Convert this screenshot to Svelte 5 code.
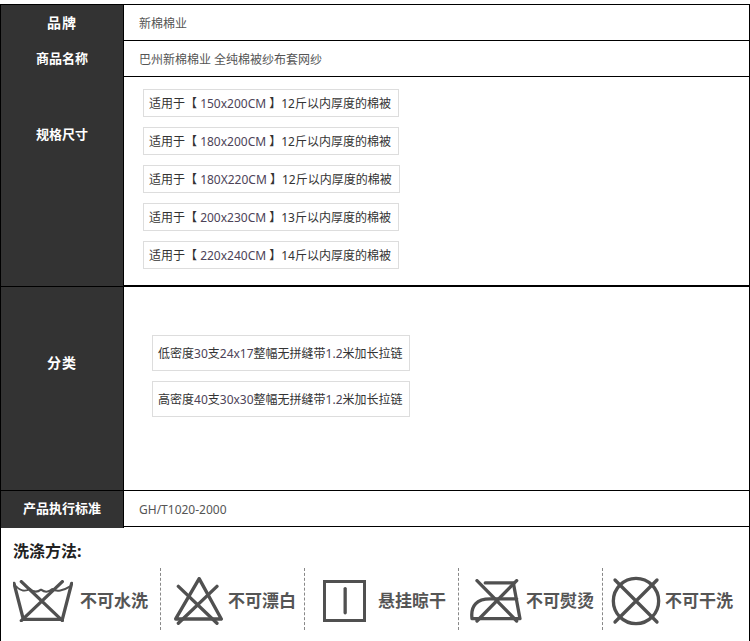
<script lang="ts">
	const sizes = [
		{ size: '150x200CM', rest: '12斤以内厚度的棉被' },
		{ size: '180x200CM', rest: '12斤以内厚度的棉被' },
		{ size: '180X220CM', rest: '12斤以内厚度的棉被' },
		{ size: '200x230CM', rest: '13斤以内厚度的棉被' },
		{ size: '220x240CM', rest: '14斤以内厚度的棉被' }
	];

	const kinds = [
		['低密度', '30', '支', '24x17', '整幅无拼缝带', '1.2', '米加长拉链'],
		['高密度', '40', '支', '30x30', '整幅无拼缝带', '1.2', '米加长拉链']
	];
</script>

<div class="page">
	<div class="sheet">
		<div class="row brand">
			<div class="label big">品牌</div>
			<div class="value">新棉棉业</div>
		</div>
		<div class="row name">
			<div class="label">商品名称</div>
			<div class="value">巴州新棉棉业 全纯棉被纱布套网纱</div>
		</div>
		<div class="row spec">
			<div class="label">规格尺寸</div>
			<div class="chips">
				{#each sizes as s}
					<div class="chip">适用于【 <span class="num">{s.size}</span> 】{s.rest}</div>
				{/each}
			</div>
		</div>
		<div class="row kind">
			<div class="label big">分类</div>
			<div class="chips">
				{#each kinds as k}
					<div class="chip">{#each k as part, i}{#if i % 2 === 1}<span class="num">{part}</span>{:else}{part}{/if}{/each}</div>
				{/each}
			</div>
		</div>
		<div class="row standard">
			<div class="label">产品执行标准</div>
			<div class="value">GH/T1020-2000</div>
		</div>

		<div class="care">
			<h3>洗涤方法:</h3>
			<div class="care-row">
				<div class="care-item">
					<svg class="wash" viewBox="0 0 180 126">
						<path d="M3 10 L31 118 H148 L176 10" />
						<path d="M10 20 C22 32 38 36 50 26 C60 36 72 38 84 29 C96 38 108 36 118 27 C130 36 152 32 170 20" class="thin" />
						<path d="M25 5 L148 122 M148 5 L25 122" />
					</svg>
					<span>不可水洗</span>
				</div>
				<div class="care-item">
					<svg class="bleach" viewBox="0 0 146 143">
						<path d="M75 5 L141 125 H5 Z" />
						<path d="M13 28 L128 138 M128 28 L13 138" />
					</svg>
					<span>不可漂白</span>
				</div>
				<div class="care-item">
					<svg class="hang" viewBox="0 0 130 127">
						<rect x="4" y="4" width="122" height="119" />
						<path d="M67 26 V99" />
					</svg>
					<span>悬挂晾干</span>
				</div>
				<div class="care-item">
					<svg class="iron" viewBox="0 0 155 133">
						<path d="M45 12 H130 L150 120 H5 C0 80 20 60 60 60 H140" />
						<path d="M20 5 L140 127 M140 5 L20 127" />
					</svg>
					<span>不可熨烫</span>
				</div>
				<div class="care-item">
					<svg class="dry" viewBox="0 0 150 150">
						<circle cx="75" cy="75" r="68" />
						<path d="M12 12 L138 138 M138 12 L12 138" />
					</svg>
					<span>不可干洗</span>
				</div>
			</div>
		</div>
	</div>
</div>

<style>
	:global(body) {
		background: #fff;
	}

	.page {
		padding-top: 4px;
		width: 750px;
		height: 637px;
		overflow: hidden;
		font-family: 'Noto Sans', 'Noto Sans CJK SC', sans-serif;
		font-size: 12px;
		color: #444;
	}

	.sheet {
		border: 1px solid #000;
		border-bottom: 0;
		height: 637px;
		box-sizing: border-box;
	}

	.row {
		display: grid;
		grid-template-columns: 123px 1fr;
		border-bottom: 1px solid #000;
	}

	.brand,
	.name,
	.standard {
		height: 35px;
	}

	.spec {
		height: 210px;
		border-bottom: 0;
	}

	.kind {
		height: 203px;
	}

	.label {
		background: #333;
		color: #fff;
		border-right: 1px solid #000;
		font-size: 13px;
		font-weight: 700;
		text-align: center;
		line-height: 35px;
	}

	.big {
		font-size: 14px;
		letter-spacing: 1px;
	}

	.spec .label {
		padding-top: 40px;
		border-bottom: 1px solid #000;
	}

	.kind .label {
		padding-top: 58px;
	}

	.value {
		padding-left: 15px;
		line-height: 37px;
		color: #555;
	}

	.chips {
		display: flex;
		flex-direction: column;
		align-items: flex-start;
		gap: 10px;
	}

	.spec .chips {
		padding: 12px 0 0 19px;
		border-bottom: 2px solid #000;
	}

	.kind .chips {
		padding: 48px 0 0 28px;
	}

	.chip {
		border: 1px solid #ddd;
		white-space: pre;
		color: #333;
	}

	.spec .chip {
		height: 26px;
		line-height: 27px;
		padding: 0 7px 0 5px;
	}

	.kind .chip {
		height: 34px;
		line-height: 35px;
		padding: 0 6px 0 5px;
	}

	.num {
		color: #4d4358;
	}

	.care {
		padding: 15px 0 0 12px;
	}

	h3 {
		margin: 0;
		font-size: 16px;
		line-height: 18px;
		font-weight: 700;
		color: #222;
	}

	.care-row {
		display: flex;
		margin-top: 8px;
	}

	.care-item {
		height: 62px;
		padding-top: 4px;
		display: flex;
		align-items: center;
		box-sizing: border-box;
		border-right: 1px dashed #888;
	}

	.care-item:nth-child(1) { width: 148px; gap: 7px; }
	.care-item:nth-child(2) { width: 144px; padding-left: 13px; gap: 5px; }
	.care-item:nth-child(3) { width: 154px; padding-left: 18px; gap: 12px; }
	.care-item:nth-child(4) { width: 144px; padding-left: 11px; gap: 4px; }
	.care-item:nth-child(5) { border-right: 0; padding-left: 8px; gap: 4px; }

	.care-item span {
		margin-top: -3px;
		font-size: 17px;
		font-weight: 700;
		color: #555;
	}

	svg {
		display: block;
		flex: none;
		fill: none;
		stroke: #505050;
		stroke-width: 10;
		stroke-linecap: round;
		stroke-linejoin: round;
	}

	.thin {
		stroke-width: 6;
	}

	.wash { width: 60px; height: 42px; }
	.bleach { width: 49px; height: 48px; }
	.hang { width: 43px; height: 42px; }
	.iron { width: 52px; height: 44px; }
	.dry { width: 50px; height: 50px; }
</style>
